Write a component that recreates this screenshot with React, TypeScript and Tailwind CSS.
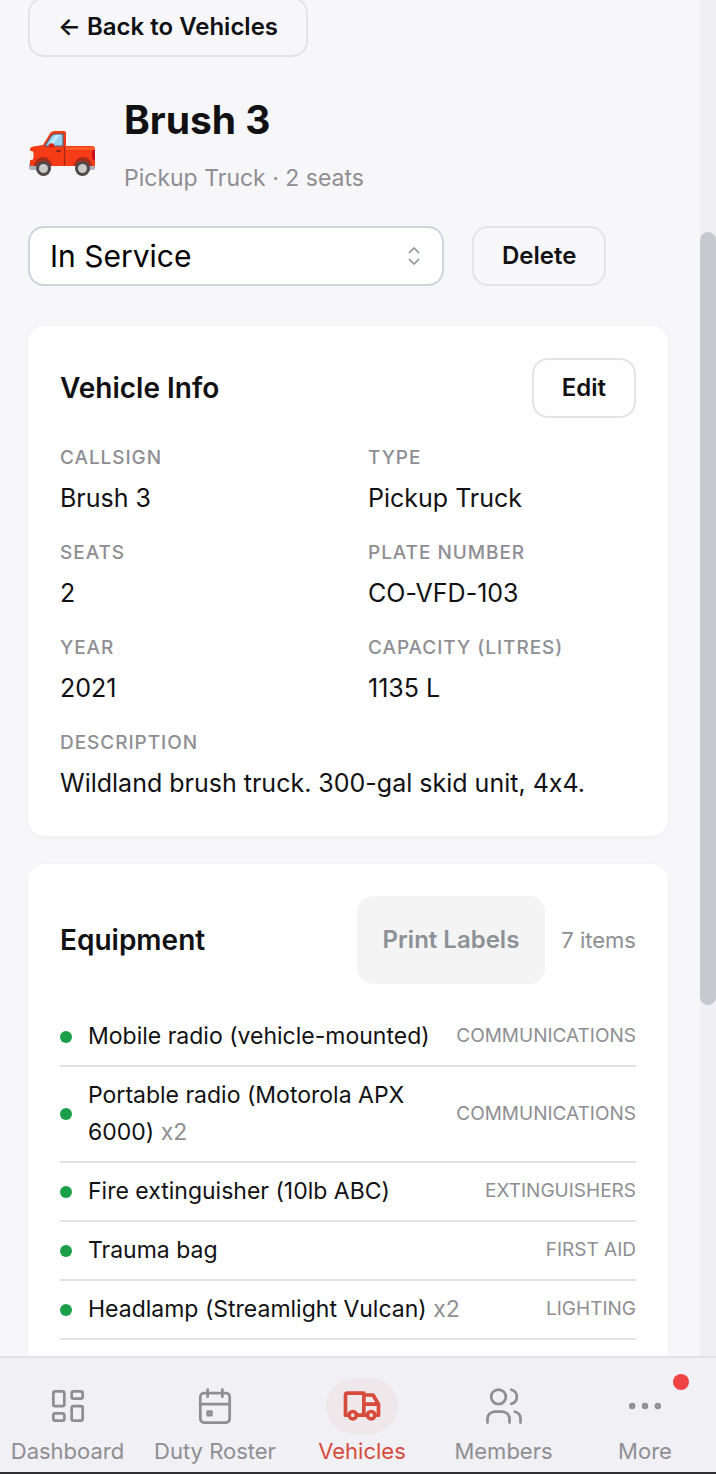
import { ReactNode } from 'react'
import { IconType } from 'react-icons'
import {
	TbCalendarEvent,
	TbDots,
	TbLayoutDashboard,
	TbTruck,
	TbUsers
} from 'react-icons/tb'
import { clsx } from 'clsx'

type Field = { label: string; value: string; wide?: boolean }
type Equipment = { name: string; quantity?: number; category: string }
type Tab = { label: string; icon: IconType; active?: boolean; badge?: boolean }

const fields: Field[] = [
	{ label: 'Callsign', value: 'Brush 3' },
	{ label: 'Type', value: 'Pickup Truck' },
	{ label: 'Seats', value: '2' },
	{ label: 'Plate number', value: 'CO-VFD-103' },
	{ label: 'Year', value: '2021' },
	{ label: 'Capacity (litres)', value: '1135 L' },
	{
		label: 'Description',
		value: 'Wildland brush truck. 300-gal skid unit, 4x4.',
		wide: true
	}
]

const equipment: Equipment[] = [
	{ name: 'Mobile radio (vehicle-mounted)', category: 'Communications' },
	{
		name: 'Portable radio (Motorola APX 6000)',
		quantity: 2,
		category: 'Communications'
	},
	{ name: 'Fire extinguisher (10lb ABC)', category: 'Extinguishers' },
	{ name: 'Trauma bag', category: 'First aid' },
	{ name: 'Headlamp (Streamlight Vulcan)', quantity: 2, category: 'Lighting' }
]

const tabs: Tab[] = [
	{ label: 'Dashboard', icon: TbLayoutDashboard },
	{ label: 'Duty Roster', icon: TbCalendarEvent },
	{ label: 'Vehicles', icon: TbTruck, active: true },
	{ label: 'Members', icon: TbUsers },
	{ label: 'More', icon: TbDots, badge: true }
]

const PickupIcon = () => (
	<svg viewBox="0 0 68 68" className="size-[68px] shrink-0" aria-hidden="true">
		<path d="M1 53h9v7H3q-2 0-2-2zM59 53h8v5q0 2-2 2h-6z" fill="#a9b3bf" />
		<path
			d="M2 40q0-3 3-3.500l10-1.500 6-10q2-4 6-4h9q2 0 2 2v13h26q3 0 3 3v17H2z"
			fill="#f63c17"
		/>
		<path d="M38 37h26q3 0 3 3h-29z" fill="#ff5a28" />
		<path
			d="M17 36l5-8q2-4 5-4h8v12z"
			fill="#92d4f2"
			stroke="#5d5f68"
			strokeWidth="1.200"
		/>
		<path d="M21 34l7-9h4l-7 9z" fill="#c2ebfa" />
		<path d="M36.500 37v19" stroke="#a12818" strokeWidth="1.200" />
		<rect x="28" y="40" width="5" height="2" rx="1" fill="#8c2418" />
		<ellipse cx="23.500" cy="35.500" rx="2.800" ry="2.300" fill="#d92415" />
		<path d="M2 41h1.500q2 0 2 3v3q0 3-2 3H2z" fill="#f4f1ee" />
		<path d="M67 40h-1q-2 0-2 3v4q0 3 2 3h1z" fill="#c70e20" />
		<path d="M6 56a9 9 0 0 1 18 0zM46 56a9 9 0 0 1 18 0z" fill="#a82c1b" />
		<circle cx="15.500" cy="58.500" r="7.500" fill="#51484a" />
		<circle cx="54.500" cy="58.500" r="7.500" fill="#51484a" />
		<circle cx="15.500" cy="58.500" r="4.500" fill="#c9cac8" />
		<circle cx="54.500" cy="58.500" r="4.500" fill="#c9cac8" />
	</svg>
)

const OutlineButton = ({ children }: { children: ReactNode }) => (
	<button
		type="button"
		className="h-15 rounded-2xl border-2 border-[#e3e4e8] px-7 text-[24px] font-semibold whitespace-nowrap"
	>
		{children}
	</button>
)

const Card = ({ children }: { children: ReactNode }) => (
	<section className="rounded-2xl bg-white p-8 shadow-[0_1px_4px_rgba(0,0,0,0.05)]">
		{children}
	</section>
)

const StatusSelect = () => (
	<div className="relative w-[65%]">
		<select
			aria-label="Status"
			className="h-15 w-full appearance-none rounded-2xl border-2 border-[#d0d4da] bg-white px-5 text-[30px] text-black"
		>
			<option>In Service</option>
		</select>
		<svg
			viewBox="0 0 12 18"
			className="pointer-events-none absolute top-1/2 right-6 h-[18px] w-3 -translate-y-1/2"
			fill="none"
			stroke="#868e96"
			strokeWidth="1.500"
			aria-hidden="true"
		>
			<path d="M1 6l5-5 5 5M1 12l5 5 5-5" />
		</svg>
	</div>
)

const VehicleInfo = () => (
	<Card>
		<div className="mb-[27px] flex items-center justify-between">
			<h2 className="text-[28px] font-semibold">Vehicle Info</h2>
			<OutlineButton>Edit</OutlineButton>
		</div>
		<dl className="grid grid-cols-2 gap-x-10 gap-y-[21px]">
			{fields.map(({ label, value, wide }) => (
				<div key={label} className={clsx(wide && 'col-span-2')}>
					<dt className="text-[19px] leading-[26px] font-medium tracking-wider text-[#8e8e93] uppercase">
						{label}
					</dt>
					<dd className="mt-1.5 text-[25px] leading-[42px]">{value}</dd>
				</div>
			))}
		</dl>
	</Card>
)

const EquipmentList = () => (
	<Card>
		<div className="mb-6 flex items-center gap-4">
			<h2 className="mr-auto text-[28px] font-semibold">Equipment</h2>
			<button
				type="button"
				disabled
				className="h-22 rounded-2xl bg-[#f4f4f5] px-[26px] text-[24px] font-semibold text-[#8b9197]"
			>
				Print Labels
			</button>
			<span className="text-[22px] text-[#8e8e93]">7 items</span>
		</div>
		<ul>
			{equipment.map(({ name, quantity, category }) => (
				<li
					key={name}
					className="flex items-center gap-4 border-b-2 border-[#e3e3e6] py-2.5"
				>
					<span className="size-3 shrink-0 rounded-full bg-[#1ba049]" />
					<span className="flex-1 text-[23px] leading-[37px]">
						{name}
						{quantity && <span className="text-[#8e8e93]"> x{quantity}</span>}
					</span>
					<span className="text-[19px] text-[#8e8e93] uppercase">
						{category}
					</span>
				</li>
			))}
		</ul>
	</Card>
)

const TabBar = () => (
	<nav className="grid shrink-0 grid-cols-[135fr_160fr_134fr_149fr_134fr] border-t-2 border-b-2 border-t-[#e2e2e5] border-b-[#303035] bg-[#f0f0f5] pt-5 pr-1 pb-1">
		{tabs.map(({ label, icon: Icon, active, badge }) => (
			<a
				key={label}
				href="#"
				aria-current={active ? 'page' : undefined}
				className={clsx(
					'flex flex-col items-center text-[22px] leading-[34px] whitespace-nowrap',
					active ? 'text-[#d64b3b]' : 'text-[#8e8e93]'
				)}
			>
				<span
					className={clsx(
						'relative flex h-14 w-[72px] items-center justify-center rounded-full',
						active && 'bg-[#eee8ea]'
					)}
				>
					<Icon className="size-11" strokeWidth={active ? 2 : 1.5} />
					{badge && (
						<span className="absolute -top-1 -right-2 size-4 rounded-full bg-[#f04444]" />
					)}
				</span>
				{label}
			</a>
		))}
	</nav>
)

export default function App() {
	return (
		<div className="flex h-screen flex-col bg-[#f7f7fa] font-[Inter,sans-serif] text-[#111114] [font-feature-settings:'calt'_0]">
			<div className="flex min-h-0 flex-1">
				<main className="min-w-0 flex-1 overflow-hidden pr-8 pl-7">
					<div className="-mt-[3px]">
						<OutlineButton>← Back to Vehicles</OutlineButton>
					</div>
					<header className="mt-[33px] flex items-center gap-7">
						<PickupIcon />
						<div>
							<h1 className="text-[39px] leading-[60px] font-bold">Brush 3</h1>
							<p className="mt-2 text-[23px] leading-10 text-[#8e8e93]">
								Pickup Truck · 2 seats
							</p>
						</div>
					</header>
					<div className="mt-7 mb-10 flex gap-7">
						<StatusSelect />
						<OutlineButton>Delete</OutlineButton>
					</div>
					<div className="flex flex-col gap-7">
						<VehicleInfo />
						<EquipmentList />
					</div>
				</main>
				<div className="w-4 shrink-0 bg-[#f0f0f4] pt-[232px]" aria-hidden="true">
					<div className="h-11/16 rounded-full bg-[#c8c8d0]" />
				</div>
			</div>
			<TabBar />
		</div>
	)
}
